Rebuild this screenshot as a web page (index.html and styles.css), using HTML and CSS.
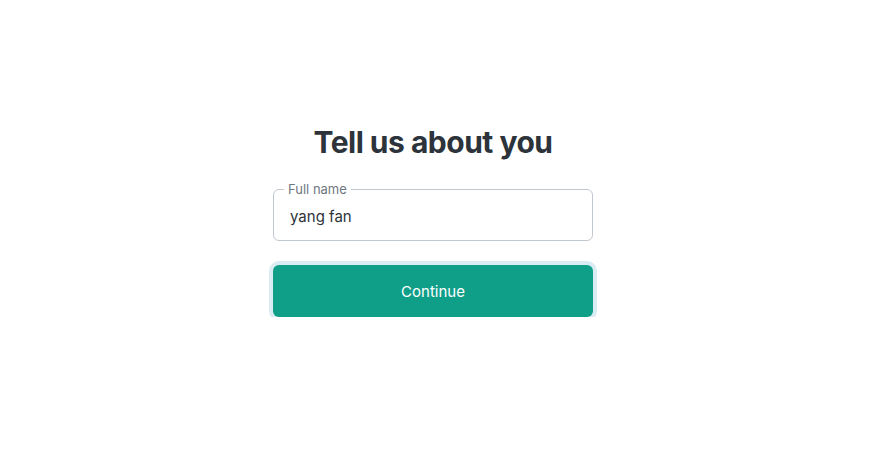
FILE: index.html
```html
<!DOCTYPE html>
<html>
<head>
<meta charset="utf-8">
<link rel="stylesheet" href="styles.css">
</head>
<body>
<main class="page">
  <section class="card">
    <h1 class="title">Tell us about you</h1>
    <fieldset class="field">
      <legend class="field-label">Full name</legend>
      <div class="field-value">yang fan</div>
    </fieldset>
    <button class="btn">Continue</button>
  </section>
</main>
</body>
</html>
```
FILE: styles.css
```css
html, body {
  margin: 0;
  padding: 0;
  background: #ffffff;
}
body {
  font-family: Inter, "Noto Sans", sans-serif;
  color: #2d333a;
}
.page {
  width: 866px;
  display: flex;
  justify-content: center;
  padding-top: 122px;
}
.card {
  width: 320px;
  display: flex;
  flex-direction: column;
}
.title {
  margin: 0;
  text-align: center;
  font-size: 30px;
  font-weight: 700;
  letter-spacing: -0.5px;
  line-height: 40px;
  color: #2d333a;
}
.field {
  margin: 21px 0 0 0;
  padding: 0 0 0 16px;
  height: 58px;
  box-sizing: border-box;
  border: 1px solid #c2c8d0;
  border-radius: 6px;
  min-width: 0;
}
.field-label {
  font-size: 13px;
  color: #6f7780;
  padding: 0 4px;
  margin-left: -6px;
  line-height: 13px;
}
.field-value {
  font-size: 15px;
  line-height: 20px;
  color: #2d333a;
  padding-top: 11px;
}
.btn {
  margin-top: 24px;
  height: 52px;
  border: none;
  border-radius: 6px;
  background: #0f9e88;
  color: #ffffff;
  font-family: Inter, "Noto Sans", sans-serif;
  font-size: 15px;
  box-shadow: 0 0 0 4px #d9ecf3;
  cursor: pointer;
}
```
